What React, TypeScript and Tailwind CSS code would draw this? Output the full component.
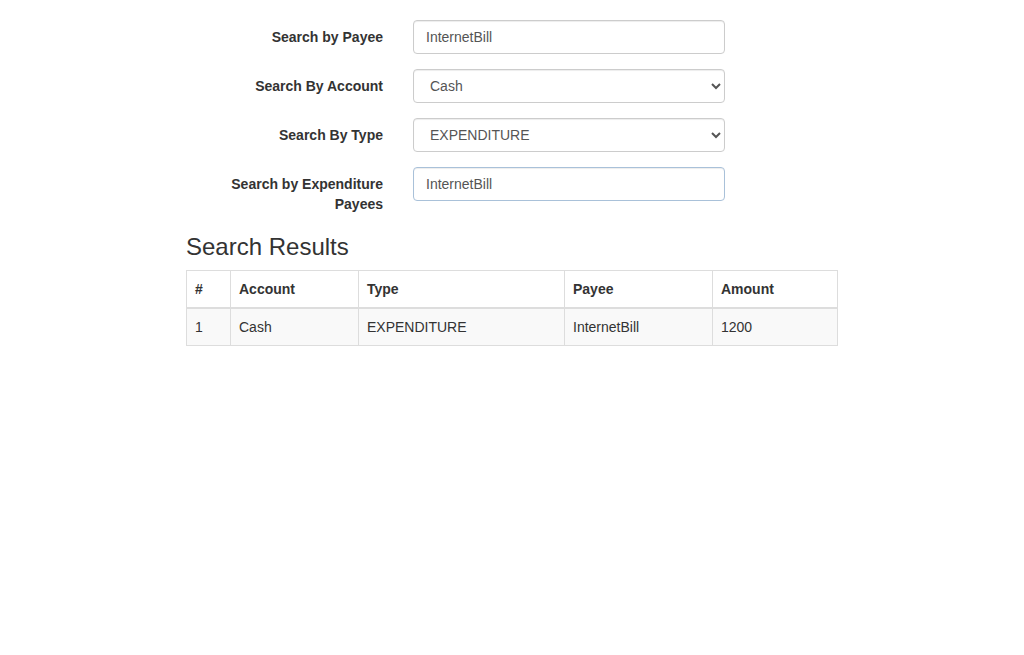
import React from "react";

const font = { fontFamily: '"Liberation Sans", Arial, sans-serif' };

interface Result {
  id: number;
  account: string;
  type: string;
  payee: string;
  amount: number;
}

const results: Result[] = [
  { id: 1, account: "Cash", type: "EXPENDITURE", payee: "InternetBill", amount: 1200 },
];

function Row({ label, children }: { label: string; children: React.ReactNode }) {
  return (
    <div className="flex mb-[15px]">
      <label className="w-[197px] shrink-0 pt-[7px] text-right text-[14px] leading-[20px] font-bold text-[#333]">
        {label}
      </label>
      <div className="ml-[30px] w-[312px]">{children}</div>
    </div>
  );
}

const inputCls =
  "block w-full h-[34px] px-[12px] py-[6px] text-[14px] leading-[20px] text-[#555] bg-white border border-[#ccc] rounded-[4px] shadow-[inset_0_1px_1px_rgba(0,0,0,0.075)] outline-none";

export default function App() {
  return (
    <div className="min-h-[655px] bg-white" style={font}>
      <div className="w-[652px] ml-[186px] pt-[20px]">
        <form onSubmit={(e) => e.preventDefault()}>
          <Row label="Search by Payee">
            <input className={inputCls} defaultValue="InternetBill" />
          </Row>
          <Row label="Search By Account">
            <select className={inputCls} defaultValue="Cash" style={font}>
              <option>Cash</option>
              <option>Bank</option>
            </select>
          </Row>
          <Row label="Search By Type">
            <select className={inputCls} defaultValue="EXPENDITURE" style={font}>
              <option>EXPENDITURE</option>
              <option>INCOME</option>
            </select>
          </Row>
          <Row label="Search by Expenditure Payees">
            <input
              className={inputCls + " !border-[#a9c1d9]"}
              defaultValue="InternetBill"
            />
          </Row>
        </form>

        <h3 className="mt-[20px] mb-[10px] text-[24px] leading-[26.4px] font-normal text-[#333]">
          Search Results
        </h3>

        <table className="w-full border-collapse border border-[#ddd] text-[14px] leading-[20px] text-[#333]">
          <thead>
            <tr>
              <th className="w-[44px] p-[8px] text-left font-bold border border-[#ddd] border-b-2">#</th>
              <th className="w-[128px] p-[8px] text-left font-bold border border-[#ddd] border-b-2">Account</th>
              <th className="w-[206px] p-[8px] text-left font-bold border border-[#ddd] border-b-2">Type</th>
              <th className="w-[148px] p-[8px] text-left font-bold border border-[#ddd] border-b-2">Payee</th>
              <th className="p-[8px] text-left font-bold border border-[#ddd] border-b-2">Amount</th>
            </tr>
          </thead>
          <tbody>
            {results.map((r) => (
              <tr key={r.id} className="bg-[#f9f9f9]">
                <td className="p-[8px] border border-[#ddd]">{r.id}</td>
                <td className="p-[8px] border border-[#ddd]">{r.account}</td>
                <td className="p-[8px] border border-[#ddd]">{r.type}</td>
                <td className="p-[8px] border border-[#ddd]">{r.payee}</td>
                <td className="p-[8px] border border-[#ddd]">{r.amount}</td>
              </tr>
            ))}
          </tbody>
        </table>
      </div>
    </div>
  );
}
